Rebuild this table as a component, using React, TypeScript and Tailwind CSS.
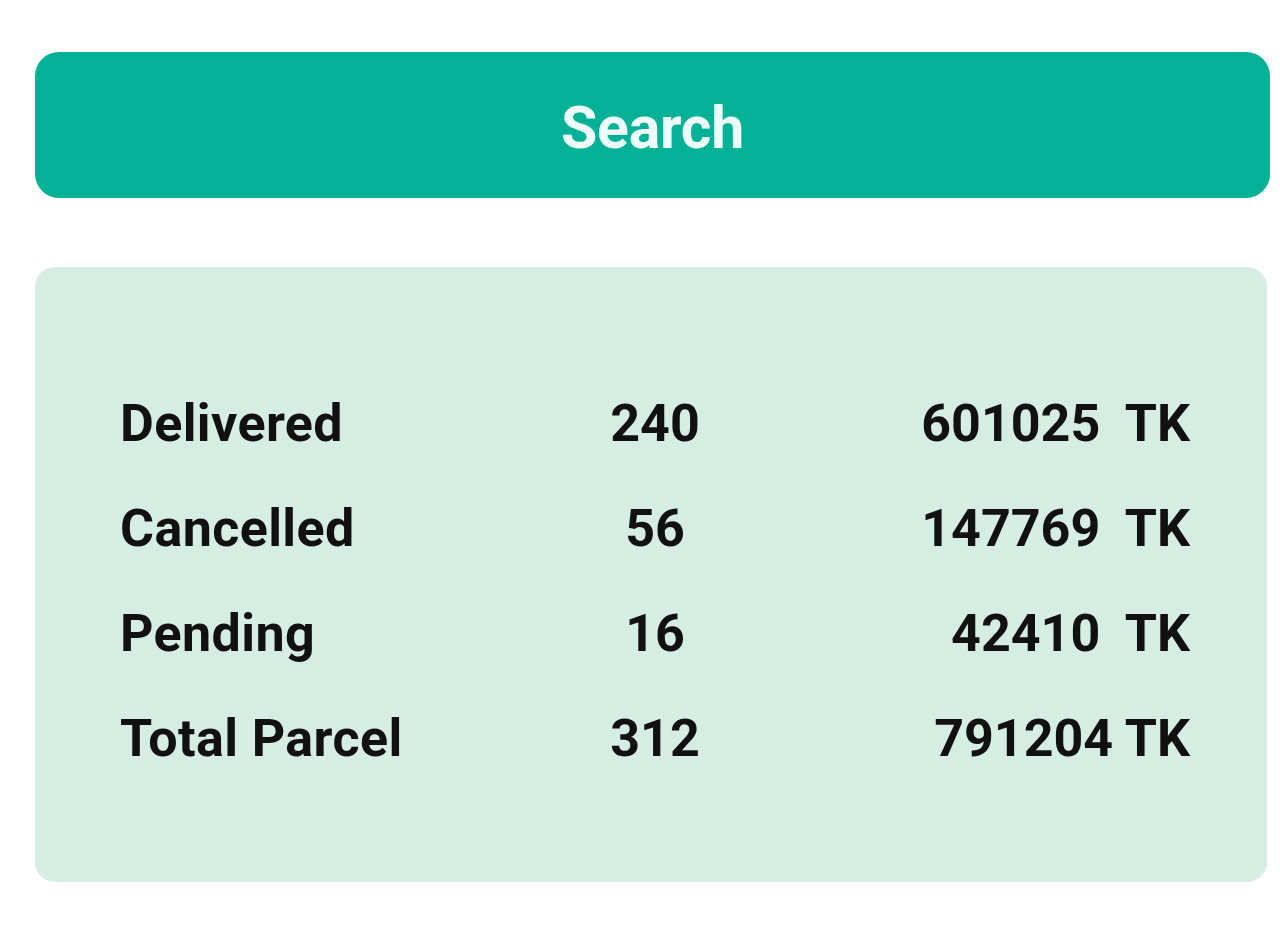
import React from "react";

const rows = [
  { label: "Delivered", count: "240", amount: "601025  TK" },
  { label: "Cancelled", count: "56", amount: "147769  TK" },
  { label: "Pending", count: "16", amount: "42410  TK" },
  { label: "Total Parcel", count: "312", amount: "791204 TK" },
];

export default function App() {
  return (
    <div
      className="w-[1280px] h-[925px] bg-white pt-[52px] pl-[35px] pr-[10px]"
      style={{ fontFamily: "Roboto, 'Noto Sans', Arial, sans-serif" }}
    >
      <button className="w-[1235px] h-[146px] rounded-[24px] bg-[#03b296] text-[#effffa] text-[59px] font-bold flex items-center justify-center pt-[6px] tracking-[-0.3px]">
        Search
      </button>
      <div className="mt-[69px] w-[1232px] h-[615px] rounded-[20px] bg-[#d6ede3] pt-[104px] pl-[85px] pr-[77px]">
        {rows.map((r) => (
          <div
            key={r.label}
            className="grid grid-cols-[460px_150px_1fr] h-[105px] leading-[105px] text-[52px] font-bold text-[#111111]"
          >
            <span className="tracking-[0.4px]">{r.label}</span>
            <span className="text-center">{r.count}</span>
            <span className="text-right whitespace-pre">{r.amount}</span>
          </div>
        ))}
      </div>
    </div>
  );
}
